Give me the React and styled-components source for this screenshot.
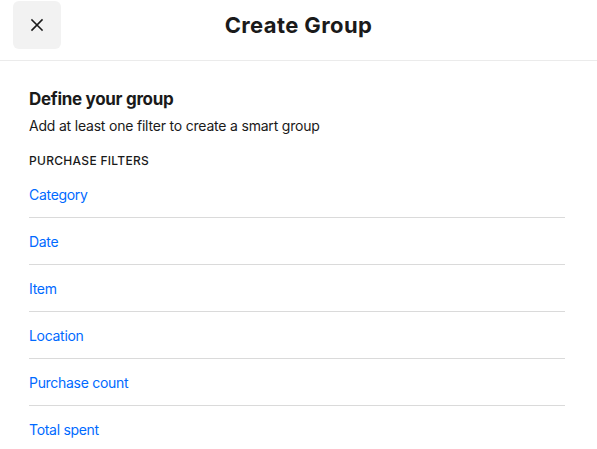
import React from "react";
import styled, { createGlobalStyle } from "styled-components";

const GlobalStyle = createGlobalStyle`
  html, body {
    margin: 0;
    padding: 0;
    background: #fff;
    font-family: Inter, "Noto Sans", sans-serif;
    color: #1a1a1a;
  }
`;

const filters = ['Category', 'Date', 'Item', 'Location', 'Purchase count', 'Total spent']

const App = () => {
  return (
    <Page>
      <GlobalStyle />
      <Header>
        <CloseButton aria-label="Close">
          <svg width="14" height="14" viewBox="0 0 14 14" fill="none">
            <path d="M2 2L12 12M12 2L2 12" stroke="#1a1a1a" strokeWidth="1.6" strokeLinecap="square" />
          </svg>
        </CloseButton>
        <Title>Create Group</Title>
      </Header>
      <Content>
        <Heading>Define your group</Heading>
        <Subtitle>Add at least one filter to create a smart group</Subtitle>
        <SectionLabel>Purchase filters</SectionLabel>
        <FilterList>
          {filters.map(f => (
            <FilterRow key={f}>
              <FilterLink>{f}</FilterLink>
            </FilterRow>
          ))}
        </FilterList>
      </Content>
    </Page>
  );
};

const Page = styled.div`
  width: 597px;
  height: 449px;
  overflow: hidden;
  background: #fff;
`;

const Header = styled.div`
  position: relative;
  display: flex;
  align-items: center;
  justify-content: center;
  height: 48px;
  padding: 1px 13px 11px;
  border-bottom: 1px solid #ebebeb;
`;

const CloseButton = styled.button`
  position: absolute;
  left: 13px;
  top: 1px;
  width: 48px;
  height: 48px;
  border: none;
  border-radius: 6px;
  background: #f2f2f2;
  display: flex;
  align-items: center;
  justify-content: center;
  padding: 0;
  cursor: pointer;
`;

const Title = styled.div`
  font-size: 22px;
  font-weight: 700;
  letter-spacing: 0.4px;
  color: #1a1a1a;
`;

const Content = styled.div`
  padding: 26px 32px 0 29px;
`;

const Heading = styled.div`
  font-size: 17px;
  font-weight: 700;
  line-height: 24px;
  letter-spacing: -0.3px;
  color: #1a1a1a;
`;

const Subtitle = styled.div`
  margin-top: 5px;
  font-size: 14px;
  line-height: 20px;
  letter-spacing: -0.2px;
  color: #1a1a1a;
`;

const SectionLabel = styled.div`
  margin-top: 17px;
  font-size: 12px;
  line-height: 16px;
  font-weight: 500;
  letter-spacing: 0.3px;
  text-transform: uppercase;
  color: #1a1a1a;
`;

const FilterList = styled.div`
  margin-top: 2px;
  display: flex;
  flex-direction: column;
`;

const FilterRow = styled.div`
  height: 46px;
  display: flex;
  align-items: center;
  border-bottom: 1px solid #dadada;

  &:last-child {
    border-bottom: none;
  }
`;

const FilterLink = styled.span`
  font-size: 14px;
  letter-spacing: -0.3px;
  color: #006aff;
  cursor: pointer;
`;

export default App
